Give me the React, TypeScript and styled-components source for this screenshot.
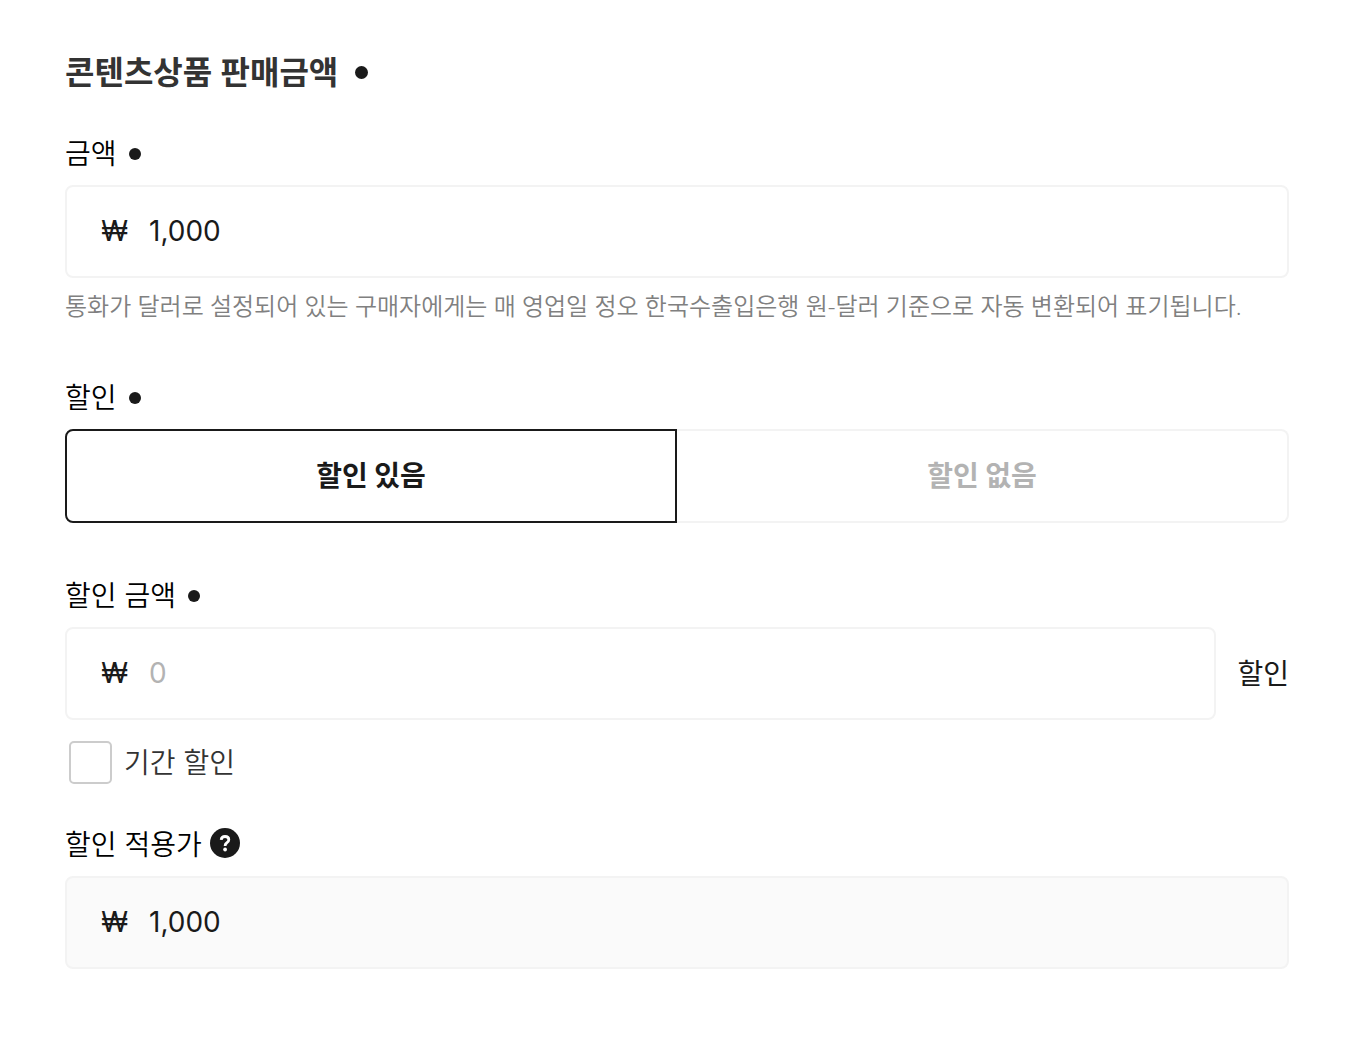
import React, { useState } from 'react';
import styled, { createGlobalStyle } from 'styled-components';

const GlobalStyle = createGlobalStyle`
  *, *::before, *::after { box-sizing: border-box; }
  body {
    margin: 0;
    background: #fff;
    color: #1a1a1a;
    font-family: Inter, "Noto Sans CJK KR", sans-serif;
  }
  button, input { font: inherit; color: inherit; }
`;

const Form = styled.form`
  display: flex;
  flex-direction: column;
  padding: 48px 67px 48px 65px;
`;

const Title = styled.h1`
  display: flex;
  align-items: center;
  gap: 17px;
  margin: 0;
  font-family: "Noto Sans", "Noto Sans CJK KR", sans-serif;
  font-size: 32px;
  line-height: 48px;
  font-weight: 700;
  color: #333;
`;

const Dot = styled.span<{ $size: number }>`
  flex: none;
  width: ${({ $size }) => $size}px;
  height: ${({ $size }) => $size}px;
  border-radius: 50%;
  background: #1a1a1a;
`;

const Field = styled.div<{ $gap: number }>`
  display: flex;
  flex-direction: column;
  margin-top: ${({ $gap }) => $gap}px;
`;

const LabelRow = styled.div<{ $gap: number }>`
  display: flex;
  align-items: center;
  gap: ${({ $gap }) => $gap}px;
  margin-bottom: 10px;
  color: #000;
  font-size: 28px;
  line-height: 42px;
  font-weight: 350;
`;

const MoneyBox = styled.div<{ $muted?: boolean }>`
  display: flex;
  flex: 1;
  align-items: center;
  gap: 20px;
  min-width: 0;
  padding: 24px 33px;
  border: 2px solid #f3f3f3;
  border-radius: 8px;
  background: ${({ $muted }) => ($muted ? '#fafafa' : '#fff')};
  font-size: 28px;
  line-height: 41px;
`;

const Currency = styled.span`
  width: 29px;
  text-align: center;
`;

const MoneyInput = styled.input`
  flex: 1;
  min-width: 0;
  height: 41px;
  padding: 0;
  border: 0;
  outline: 0;
  background: transparent;
  &::placeholder { color: #b3b3b3; opacity: 1; }
`;

const Hint = styled.p`
  margin: 10px 0 0;
  font-family: "Noto Sans", "Noto Sans CJK KR", sans-serif;
  font-size: 24px;
  line-height: 36px;
  font-weight: 350;
  color: #808080;
`;

const Segments = styled.div`
  display: grid;
  grid-template-columns: 1fr 1fr;
`;

const Segment = styled.button<{ $side: 'left' | 'right' }>`
  height: 94px;
  padding: 0 0 4px;
  border: 2px solid #f3f3f3;
  border-radius: ${({ $side }) => ($side === 'left' ? '8px 0 0 8px' : '0 8px 8px 0')};
  ${({ $side }) => ($side === 'left' ? 'border-right-width: 0;' : 'border-left-width: 0;')}
  background: #fff;
  color: #b3b3b3;
  font-size: 28px;
  font-weight: 700;
  cursor: pointer;
  &[aria-pressed='true'] {
    border: 2px solid #1a1a1a;
    color: #1a1a1a;
  }
`;

const InputRow = styled.div`
  display: flex;
  align-items: center;
  gap: 21px;
`;

const Suffix = styled.span`
  font-size: 28px;
  line-height: 40px;
`;

const CheckLabel = styled.label`
  display: flex;
  align-items: center;
  align-self: flex-start;
  gap: 12px;
  margin: 21px 0 0 4px;
  color: #333;
  font-size: 28px;
  line-height: 40px;
  font-weight: 350;
`;

const Checkbox = styled.input`
  appearance: none;
  width: 43px;
  height: 43px;
  margin: 0;
  border: 2px solid #ccc;
  border-radius: 5px;
  background: #fff;
  &:checked { background: #1a1a1a; border-color: #1a1a1a; }
`;

const HelpButton = styled.button`
  display: flex;
  padding: 0 0 4px;
  border: 0;
  background: none;
  cursor: pointer;
`;

const HelpIcon = () => (
  <svg width="30" height="30" viewBox="0 0 30 30" aria-hidden="true">
    <circle cx="15" cy="15" r="15" fill="#1a1a1a" />
    <path
      d="M11.2 11.8C11.4 9.7 12.9 8.5 15 8.5c2.2 0 3.8 1.3 3.8 3.2 0 1.5-.8 2.2-1.9 3-1.3.8-1.7 1.2-1.7 2.6v.6"
      fill="none"
      stroke="#fff"
      strokeWidth="2.8"
    />
    <circle cx="15.1" cy="21.5" r="1.9" fill="#fff" />
  </svg>
);

export default function App() {
  const [price, setPrice] = useState('1,000');
  const [discount, setDiscount] = useState('');
  const [discounted, setDiscounted] = useState(true);

  return (
    <>
      <GlobalStyle />
      <Form onSubmit={(e) => e.preventDefault()}>
        <Title>콘텐츠상품 판매금액<Dot $size={13} /></Title>

        <Field $gap={37}>
          <LabelRow $gap={12}>
            <label htmlFor="price">금액</label>
            <Dot $size={12} />
          </LabelRow>
          <MoneyBox>
            <Currency>₩</Currency>
            <MoneyInput id="price" value={price} onChange={(e) => setPrice(e.target.value)} />
          </MoneyBox>
          <Hint>통화가 달러로 설정되어 있는 구매자에게는 매 영업일 정오 한국수출입은행 원-달러 기준으로 자동 변환되어 표기됩니다.</Hint>
        </Field>

        <Field $gap={53}>
          <LabelRow $gap={12}>
            <span id="discount-label">할인</span>
            <Dot $size={12} />
          </LabelRow>
          <Segments role="group" aria-labelledby="discount-label">
            <Segment type="button" $side="left" aria-pressed={discounted} onClick={() => setDiscounted(true)}>
              할인 있음
            </Segment>
            <Segment type="button" $side="right" aria-pressed={!discounted} onClick={() => setDiscounted(false)}>
              할인 없음
            </Segment>
          </Segments>
        </Field>

        <Field $gap={52}>
          <LabelRow $gap={12}>
            <label htmlFor="discount">할인 금액</label>
            <Dot $size={12} />
          </LabelRow>
          <InputRow>
            <MoneyBox>
              <Currency>₩</Currency>
              <MoneyInput id="discount" placeholder="0" value={discount} onChange={(e) => setDiscount(e.target.value)} />
            </MoneyBox>
            <Suffix>할인</Suffix>
          </InputRow>
          <CheckLabel>
            <Checkbox type="checkbox" />
            기간 할인
          </CheckLabel>
        </Field>

        <Field $gap={40}>
          <LabelRow $gap={8}>
            <label htmlFor="final-price">할인 적용가</label>
            <HelpButton type="button" aria-label="할인 적용가"><HelpIcon /></HelpButton>
          </LabelRow>
          <MoneyBox $muted>
            <Currency>₩</Currency>
            <MoneyInput id="final-price" value={price} readOnly />
          </MoneyBox>
        </Field>
      </Form>
    </>
  );
}
